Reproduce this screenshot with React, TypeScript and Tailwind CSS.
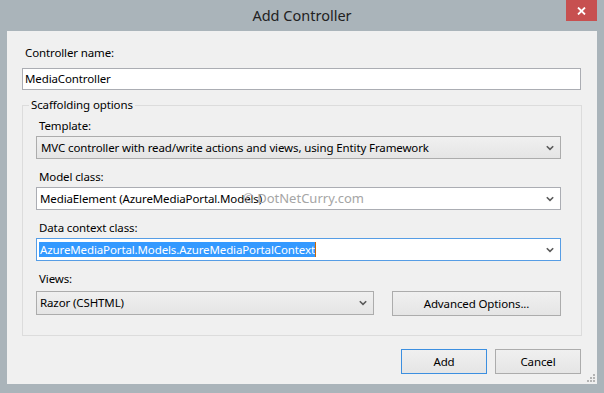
import type { ReactNode } from "react";

function Chevron() {
  return (
    <svg width="8" height="6" viewBox="0 0 8 6" className="shrink-0">
      <path d="M0.8 1.2 L4 4.4 L7.2 1.2" fill="none" stroke="#5a5a5a" strokeWidth="1.6" />
    </svg>
  );
}

const tones = {
  gray: "border-[#acacac] bg-linear-to-b from-[#f0f0f0] to-[#e5e5e5]",
  white: "border-[#abadb3] bg-white",
  focus: "border-[#569de5] bg-white",
};

function Combo({
  tone,
  className,
  children,
}: {
  tone: keyof typeof tones;
  className: string;
  children: ReactNode;
}) {
  return (
    <div className={`relative flex items-center border pr-[6px] ${tones[tone]} ${className}`}>
      <div className="flex min-w-0 flex-1 items-center whitespace-nowrap">{children}</div>
      <Chevron />
    </div>
  );
}

function Field({ label, top, children }: { label: string; top: string; children: ReactNode }) {
  return (
    <>
      <div className={`h-[16px] pl-[3px] leading-[16px] ${top}`}>{label}</div>
      {children}
    </>
  );
}

function Button({ label, primary }: { label: string; primary?: boolean }) {
  return (
    <button
      className={`flex h-[25px] w-[86px] items-center justify-center border bg-linear-to-b from-[#f0f0f0] to-[#e5e5e5] leading-[16px] ${
        primary ? "border-[#3c8fe0]" : "border-[#acacac]"
      }`}
    >
      {label}
    </button>
  );
}

export default function App() {
  return (
    <div className="flex h-[393px] w-[604px] flex-col overflow-hidden bg-[#aab4ba] font-['Segoe_UI','Noto_Sans',sans-serif] text-[11.5px] tracking-[-0.12px] text-black">
      {/* title bar */}
      <div className="grid h-[31px] shrink-0 grid-cols-[1fr_auto_1fr]">
        <div />
        <div className="pt-[5px] text-[14.5px] leading-[20px] tracking-normal text-[#222]">Add Controller</div>
        <div className="flex justify-end pr-[7px]">
          <button className="flex h-[21px] w-[31px] items-center justify-center bg-[#c75050]">
            <svg width="9" height="8" viewBox="0 0 9 8">
              <path d="M1 0.5 L8 7.5 M8 0.5 L1 7.5" stroke="#fff" strokeWidth="1.8" />
            </svg>
          </button>
        </div>
      </div>

      {/* client area */}
      <div className="relative mx-[7px] flex h-[353px] shrink-0 flex-col bg-[#f0f0f0] pl-[15px] pt-[14px]">
        <div className="h-[16px] pl-[3px] leading-[16px]">Controller name:</div>
        <div className="mt-[7px] flex h-[22px] w-[559px] items-center border border-[#abadb3] bg-white pl-[2px]">
          MediaController
        </div>

        <fieldset className="mt-[7px] w-[560px] border border-[#dcdcdc]">
          <legend className="ml-[6px] h-[16px] px-[2px] leading-[16px]">Scaffolding options</legend>
          <div className="flex flex-col pb-[19px] pl-[13px] pt-[5px]">
            <Field label="Template:" top="">
              <Combo tone="gray" className="mt-[2px] h-[23px] w-[525px] pl-[4px]">
                MVC controller with read/write actions and views, using Entity Framework
              </Combo>
            </Field>
            <Field label="Model class:" top="mt-[10px]">
              <Combo tone="white" className="mt-[2px] h-[23px] w-[525px] pl-[3px]">
                MediaElement (AzureMediaPortal.Models)
                <span className="absolute left-[206px] top-[1px] font-['Noto_Sans',sans-serif] text-[13px] leading-[18px] tracking-normal text-[#a5a5a5]">
                  © DotNetCurry.com
                </span>
              </Combo>
            </Field>
            <Field label="Data context class:" top="mt-[10px]">
              <Combo tone="focus" className="mt-[2px] h-[23px] w-[525px] pl-[2px]">
                <span className="bg-[#3399ff] pl-[1px] leading-[15px] text-white">
                  AzureMediaPortal.Models.AzureMediaPortalContext
                </span>
                <span className="h-[15px] w-[1px] bg-[#cc6600]" />
              </Combo>
            </Field>
            <Field label="Views:" top="mt-[10px]">
              <div className="mt-[4px] flex items-start gap-[18px]">
                <Combo tone="gray" className="h-[24px] w-[338px] pl-[3px]">
                  Razor (CSHTML)
                </Combo>
                <button className="flex h-[25px] w-[169px] items-center justify-center border border-[#acacac] bg-linear-to-b from-[#f0f0f0] to-[#e5e5e5] leading-[16px]">
                  Advanced Options...
                </button>
              </div>
            </Field>
          </div>
        </fieldset>

        <div className="mt-[13px] flex w-[559px] justify-end gap-[8px]">
          <Button label="Add" primary />
          <Button label="Cancel" />
        </div>

        {/* resize grip */}
        <svg width="11" height="11" viewBox="0 0 11 11" className="absolute bottom-[1px] right-[1px]">
          <g fill="#b4b4b4">
            <rect x="8" y="2" width="2" height="2" />
            <rect x="5" y="5" width="2" height="2" />
            <rect x="8" y="5" width="2" height="2" />
            <rect x="2" y="8" width="2" height="2" />
            <rect x="5" y="8" width="2" height="2" />
            <rect x="8" y="8" width="2" height="2" />
          </g>
        </svg>
      </div>
    </div>
  );
}
